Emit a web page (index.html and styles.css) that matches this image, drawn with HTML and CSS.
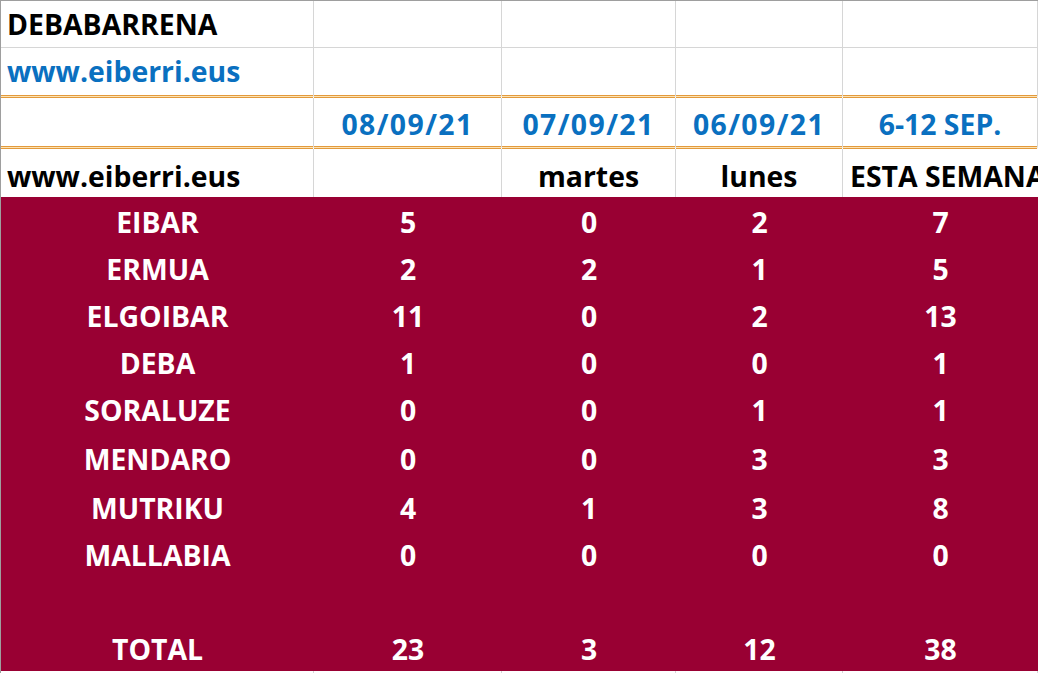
FILE: index.html
```html
<!DOCTYPE html>
<html lang="es">
<head>
<meta charset="utf-8">
<title>DEBABARRENA</title>
<link rel="stylesheet" href="styles.css">
</head>
<body>
<div class="sheet">
  <div class="row r1">
    <div class="cell left">DEBABARRENA</div>
    <div class="cell"></div><div class="cell"></div><div class="cell"></div><div class="cell"></div>
  </div>
  <div class="row r2 orange">
    <div class="cell left blue">www.eiberri.eus</div>
    <div class="cell"></div><div class="cell"></div><div class="cell"></div><div class="cell"></div>
  </div>
  <div class="row r3 orange">
    <div class="cell"></div>
    <div class="cell blue date">08/09/21</div>
    <div class="cell blue date">07/09/21</div>
    <div class="cell blue date">06/09/21</div>
    <div class="cell blue">6-12 SEP.</div>
  </div>
  <div class="row r4">
    <div class="cell left">www.eiberri.eus</div>
    <div class="cell"></div>
    <div class="cell">martes</div>
    <div class="cell">lunes</div>
    <div class="cell left clip">ESTA SEMANA</div>
  </div>
  <div class="data">
    <div class="row drow"><div class="cell">EIBAR</div><div class="cell">5</div><div class="cell">0</div><div class="cell">2</div><div class="cell">7</div></div>
    <div class="row drow"><div class="cell">ERMUA</div><div class="cell">2</div><div class="cell">2</div><div class="cell">1</div><div class="cell">5</div></div>
    <div class="row drow"><div class="cell">ELGOIBAR</div><div class="cell">11</div><div class="cell">0</div><div class="cell">2</div><div class="cell">13</div></div>
    <div class="row drow"><div class="cell">DEBA</div><div class="cell">1</div><div class="cell">0</div><div class="cell">0</div><div class="cell">1</div></div>
    <div class="row drow"><div class="cell">SORALUZE</div><div class="cell">0</div><div class="cell">0</div><div class="cell">1</div><div class="cell">1</div></div>
    <div class="row drow tall"><div class="cell">MENDARO</div><div class="cell">0</div><div class="cell">0</div><div class="cell">3</div><div class="cell">3</div></div>
    <div class="row drow"><div class="cell">MUTRIKU</div><div class="cell">4</div><div class="cell">1</div><div class="cell">3</div><div class="cell">8</div></div>
    <div class="row drow"><div class="cell">MALLABIA</div><div class="cell">0</div><div class="cell">0</div><div class="cell">0</div><div class="cell">0</div></div>
    <div class="row drow"><div class="cell"></div><div class="cell"></div><div class="cell"></div><div class="cell"></div><div class="cell"></div></div>
    <div class="row drow"><div class="cell">TOTAL</div><div class="cell">23</div><div class="cell">3</div><div class="cell">12</div><div class="cell">38</div></div>
  </div>
  <div class="row tail">
    <div class="cell"></div><div class="cell"></div><div class="cell"></div><div class="cell"></div><div class="cell"></div>
  </div>
</div>
</body>
</html>
```
FILE: styles.css
```css
html, body {
  margin: 0;
  padding: 0;
  background: #ffffff;
}
body {
  width: 1038px;
  height: 673px;
  overflow: hidden;
  font-family: "Open Sans", "Liberation Sans", sans-serif;
  font-weight: 700;
  font-size: 28.4px;
  color: #000000;
}
.sheet {
  width: 1037px;
  overflow: hidden;
  border-top: 1px solid #9e9e9e;
  border-left: 1px solid #9e9e9e;
}
.row {
  display: grid;
  grid-template-columns: 313px 188px 174px 167px 195px;
}
.cell {
  display: flex;
  align-items: flex-end;
  justify-content: center;
  padding-bottom: 3px;
  box-sizing: border-box;
  border-right: 1px solid #d6d6d6;
  white-space: nowrap;
  overflow: hidden;
  line-height: 38px;
}
.cell.left {
  justify-content: flex-start;
  padding-left: 6px;
}
.cell.clip {
  padding-left: 7px;
  border-right: none;
}
.r1 .cell { height: 47px; border-bottom: 1px solid #d6d6d6; padding-bottom: 4px; }
.r2 .cell { height: 50px; padding-bottom: 5px; }
.r3 .cell { height: 51px; }
.r4 .cell { height: 48px; padding-bottom: 2px; }
.orange .cell {
  border-bottom: 3px solid transparent;
  background-origin: border-box;
  background-image: linear-gradient(to top, #e39a3c 0 1px, #fbe3b4 1px 2px, #e39a3c 2px 3px, #ffffff 3px);
}
.blue { color: #0a70c0; }
.date { letter-spacing: 1.4px; }
.data {
  background: #990033;
  color: #ffffff;
}
.drow .cell {
  height: 47px;
  border-right: none;
}
.drow.tall .cell { height: 51px; padding-bottom: 5px; }
.tail .cell { height: 10px; }
```
